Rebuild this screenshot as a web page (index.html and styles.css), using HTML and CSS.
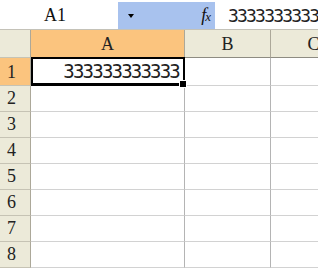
FILE: index.html
```html
<!doctype html>
<html>
    <head>
        <meta charset="UTF-8" />
        <title>Sheet</title>
        <link rel="stylesheet" href="styles.css">
    </head>
    <body>
        <div class="formula-bar">
            <div class="name-box">A1</div>
            <div class="bar-tools">
                <span class="drop-arrow"></span>
                <span class="fx"><i>f</i><i class="fx-x">x</i></span>
            </div>
            <div class="formula-text">333333333333</div>
        </div>

        <div class="sheet">
            <div class="corner"></div>
            <div class="col-head active">A</div>
            <div class="col-head">B</div>
            <div class="col-head">C</div>

            <div class="row-head active first">1</div>
            <div class="cell first selected"><span>333333333333</span></div>
            <div class="cell first"></div>
            <div class="cell first"></div>

            <div class="row-head">2</div><div class="cell"></div><div class="cell"></div><div class="cell"></div>
            <div class="row-head">3</div><div class="cell"></div><div class="cell"></div><div class="cell"></div>
            <div class="row-head">4</div><div class="cell"></div><div class="cell"></div><div class="cell"></div>
            <div class="row-head">5</div><div class="cell"></div><div class="cell"></div><div class="cell"></div>
            <div class="row-head">6</div><div class="cell"></div><div class="cell"></div><div class="cell"></div>
            <div class="row-head">7</div><div class="cell"></div><div class="cell"></div><div class="cell"></div>
            <div class="row-head">8</div><div class="cell"></div><div class="cell"></div><div class="cell"></div>
        </div>
    </body>
</html>
```
FILE: styles.css
```css
body {
    margin: 0;
    width: 318px;
    height: 268px;
    overflow: hidden;
    background: #fff;
}

.formula-bar {
    display: flex;
    height: 29px;
    background: #fff;
}

.name-box {
    flex: 0 0 118px;
    display: flex;
    align-items: center;
    justify-content: center;
    padding: 2px 8px 0 0;
    box-sizing: border-box;
    font-family: "Liberation Serif", serif;
    font-size: 18px;
    color: #111;
}

.bar-tools {
    flex: 0 0 97px;
    margin-top: 2px;
    background: #a8c2ee;
    display: flex;
    align-items: center;
    justify-content: space-between;
    padding: 0 4px 0 10px;
    box-sizing: border-box;
}

.drop-arrow {
    width: 0;
    height: 0;
    border-left: 3px solid transparent;
    border-right: 3px solid transparent;
    border-top: 4px solid #000;
}

.fx {
    font-family: "Liberation Serif", serif;
    font-size: 18px;
    color: #111;
}

.fx-x {
    font-size: 13px;
    margin-left: -1px;
}

.formula-text {
    flex: 1;
    min-width: 0;
    overflow: hidden;
    padding: 2px 0 0 13px;
    display: flex;
    align-items: center;
    white-space: nowrap;
    font-family: "DejaVu Sans Mono", monospace;
    font-size: 18px;
    letter-spacing: -1.8px;
    color: #222;
}

.sheet {
    display: grid;
    grid-template-columns: 31px 154px 86px 86px;
    grid-template-rows: 28px 28px;
    grid-auto-rows: 26px;
    border-top: 1px solid #c4c2b8;
    width: 318px;
    overflow: hidden;
}

.corner, .col-head, .row-head {
    background: #ecead9;
    border-right: 1px solid #aca899;
    border-bottom: 1px solid #c6c3b4;
    box-sizing: border-box;
    font-family: "Liberation Serif", serif;
    font-size: 18px;
    color: #222;
}

.col-head {
    display: flex;
    align-items: flex-end;
    justify-content: center;
    padding-bottom: 2px;
    border-bottom-color: #8e8c82;
}

.row-head {
    display: flex;
    align-items: flex-end;
    padding: 0 0 2px 7px;
}

.col-head.active, .row-head.active {
    background: #fbc47e;
}

.cell {
    border-right: 1px solid #b4b4b4;
    border-bottom: 1px solid #d2d2d2;
    box-sizing: border-box;
    background: #fff;
}

.selected {
    position: relative;
    display: flex;
    align-items: flex-end;
    justify-content: flex-end;
    padding: 0 5px 3px 0;
    font-family: "DejaVu Sans Mono", monospace;
    font-size: 19px;
    letter-spacing: -1.8px;
    color: #222;
}

.selected::after {
    content: "";
    position: absolute;
    top: -1px;
    left: 0;
    right: -1px;
    bottom: -1px;
    border: 2px solid #000;
    border-bottom-width: 3px;
}

.selected::before {
    content: "";
    position: absolute;
    right: -3px;
    bottom: -3px;
    width: 6px;
    height: 6px;
    background: #000;
    border: 1px solid #fff;
    z-index: 1;
}
```
